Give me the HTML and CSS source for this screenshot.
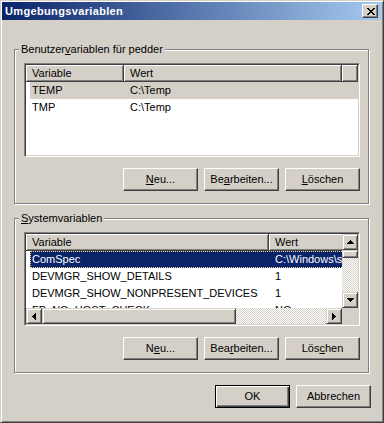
FILE: index.html
```html
<!DOCTYPE html>
<html lang="de">
<head>
    <meta charset="UTF-8">
    <meta name="viewport" content="width=device-width, initial-scale=1.0">
    <title>Umgebungsvariablen</title>
    <link rel="stylesheet" href="styles.css">
</head>
<body>
    <div class="window">
        <div class="titlebar">
            <span class="title">Umgebungsvariablen</span>
            <button class="close-btn" title="Schließen">
                <svg width="8" height="7" viewBox="0 0 8 7" shape-rendering="crispEdges"><path d="M0 0h2v1H0zM6 0h2v1H6zM1 1h2v1H1zM5 1h2v1H5zM2 2h4v1H2zM3 3h2v1H3zM2 4h4v1H2zM1 5h2v1H1zM5 5h2v1H5zM0 6h2v1H0zM6 6h2v1H6z"/></svg>
            </button>
        </div>

        <div class="dialog-body">
            <!-- user variables -->
            <div class="group">
                <div class="group-title">Benutzer<u>v</u>ariablen für pedder</div>
                <div class="listview">
                    <div class="lv-header">
                        <div class="lv-col user-name">Variable</div>
                        <div class="lv-col user-value">Wert</div>
                        <div class="lv-col lv-filler"></div>
                    </div>
                    <div class="lv-row inactive-sel">
                        <span class="cell user-name-cell">TEMP</span>
                        <span class="cell value-cell">C:\Temp</span>
                    </div>
                    <div class="lv-row">
                        <span class="cell user-name-cell">TMP</span>
                        <span class="cell value-cell">C:\Temp</span>
                    </div>
                </div>
                <div class="btn-row">
                    <button class="btn"><u>N</u>eu...</button>
                    <button class="btn">Be<u>a</u>rbeiten...</button>
                    <button class="btn"><u>L</u>öschen</button>
                </div>
            </div>

            <!-- system variables -->
            <div class="group system-group">
                <div class="group-title"><u>S</u>ystemvariablen</div>
                <div class="listview scrolling">
                    <div class="lv-viewport">
                        <div class="lv-header">
                            <div class="lv-col sys-name">Variable</div>
                            <div class="lv-col sys-value">Wert</div>
                        </div>
                        <div class="lv-row wide focused-sel">
                            <span class="cell sys-name-cell">ComSpec</span>
                            <span class="cell value-cell">C:\Windows\system32\cmd.exe</span>
                        </div>
                        <div class="lv-row wide">
                            <span class="cell sys-name-cell">DEVMGR_SHOW_DETAILS</span>
                            <span class="cell value-cell">1</span>
                        </div>
                        <div class="lv-row wide">
                            <span class="cell sys-name-cell">DEVMGR_SHOW_NONPRESENT_DEVICES</span>
                            <span class="cell value-cell">1</span>
                        </div>
                        <div class="lv-row wide">
                            <span class="cell sys-name-cell">FP_NO_HOST_CHECK</span>
                            <span class="cell value-cell">NO</span>
                        </div>
                    </div>

                    <div class="vscroll">
                        <div class="sb-btn">
                            <svg width="7" height="4" viewBox="0 0 7 4" shape-rendering="crispEdges"><path d="M3 0h1v1H3zM2 1h3v1H2zM1 2h5v1H1zM0 3h7v1H0z"/></svg>
                        </div>
                        <div class="sb-thumb v-thumb"></div>
                        <div class="sb-track"></div>
                        <div class="sb-btn">
                            <svg width="7" height="4" viewBox="0 0 7 4" shape-rendering="crispEdges"><path d="M0 0h7v1H0zM1 1h5v1H1zM2 2h3v1H2zM3 3h1v1H3z"/></svg>
                        </div>
                    </div>

                    <div class="hscroll">
                        <div class="sb-btn">
                            <svg width="4" height="7" viewBox="0 0 4 7" shape-rendering="crispEdges"><path d="M3 0h1v7H3zM2 1h1v5H2zM1 2h1v3H1zM0 3h1v1H0z"/></svg>
                        </div>
                        <div class="sb-thumb h-thumb"></div>
                        <div class="sb-track"></div>
                        <div class="sb-btn">
                            <svg width="4" height="7" viewBox="0 0 4 7" shape-rendering="crispEdges"><path d="M0 0h1v7H0zM1 1h1v5H1zM2 2h1v3H2zM3 3h1v1H3z"/></svg>
                        </div>
                    </div>

                    <div class="sb-corner"></div>
                </div>
                <div class="btn-row">
                    <button class="btn">N<u>e</u>u...</button>
                    <button class="btn">Bea<u>r</u>beiten...</button>
                    <button class="btn">Lös<u>c</u>hen</button>
                </div>
            </div>

            <div class="dialog-buttons">
                <button class="btn default">OK</button>
                <button class="btn">Abbrechen</button>
            </div>
        </div>
    </div>
</body>
</html>
```

FILE: styles.css
```css
:root {
    --face: #d4d0c8;
    --light: #ffffff;
    --shadow: #808080;
    --dark: #404040;
    --navy: #0a246a;
    --caption-end: #a6caf0;
}

* {
    margin: 0;
    padding: 0;
    box-sizing: border-box;
}

body {
    font-family: "Liberation Sans", Arial, sans-serif;
    font-size: 11px;
    color: #000;
    background: var(--face);
}

button {
    font: inherit;
    color: inherit;
}

.window {
    width: 384px;
    height: 423px;
    background: var(--face);
    border: 1px solid;
    border-color: var(--face) var(--dark) var(--dark) var(--face);
    box-shadow: inset 1px 1px var(--light), inset -1px -1px var(--shadow);
    padding: 1px;
    display: flex;
    flex-direction: column;
}

/* caption */
.titlebar {
    height: 18px;
    display: flex;
    align-items: center;
    padding: 0 4px 0 3px;
    background: linear-gradient(to right, var(--navy), var(--caption-end));
}

.title {
    color: #fff;
    font-weight: bold;
    letter-spacing: 0.35px;
    line-height: 18px;
}

.close-btn {
    margin-left: auto;
    width: 16px;
    height: 14px;
    display: flex;
    align-items: center;
    justify-content: center;
    padding-left: 1px;
    background: var(--face);
    border: 1px solid;
    border-color: var(--light) var(--dark) var(--dark) var(--light);
    box-shadow: inset -1px -1px var(--shadow);
}

.dialog-body {
    padding: 29px 13px 0 12px;
}

/* group boxes */
.group {
    border: 1px solid var(--shadow);
    box-shadow: inset 1px 1px var(--light), 1px 1px var(--light);
    padding: 0 8px 12px 9px;
}

.system-group {
    margin-top: 14px;
}

.group-title {
    width: fit-content;
    margin: -7px 0 0 -5px;
    padding: 0 2px;
    line-height: 13px;
    background: var(--face);
}

/* list views */
.listview {
    margin-top: 7px;
    height: 94px;
    background: #fff;
    border: 1px solid;
    border-color: var(--shadow) var(--light) var(--light) var(--shadow);
    box-shadow: inset 1px 1px var(--dark), inset -1px -1px var(--face);
    padding: 1px;
    overflow: hidden;
}

.lv-header {
    display: flex;
    height: 17px;
}

.lv-col {
    flex-shrink: 0;
    height: 17px;
    padding: 1px 0 0 6px;
    line-height: 15px;
    white-space: nowrap;
    background: var(--face);
    border-right: 1px solid var(--dark);
    border-bottom: 1px solid var(--dark);
    box-shadow: inset 1px 1px var(--light), inset -1px -1px var(--shadow);
}

.user-name { width: 98px; }
.user-value { width: 218px; }
.lv-filler { flex: 1; }
.sys-name { width: 243px; }
.sys-value { width: 200px; }

.lv-row {
    display: flex;
    height: 17px;
    line-height: 17px;
    margin-left: 4px;
    white-space: nowrap;
}

.lv-row.wide {
    width: 420px;
}

.cell {
    flex-shrink: 0;
}

.user-name-cell {
    width: 94px;
    padding-left: 2px;
}

.sys-name-cell {
    width: 239px;
    padding-left: 2px;
}

.value-cell {
    padding-left: 6px;
}

.inactive-sel {
    background: var(--face);
}

.focused-sel {
    background: var(--navy);
    color: #fff;
    outline: 1px dotted #f5db95;
    outline-offset: -1px;
}

/* list with scrollbars */
.listview.scrolling {
    display: grid;
    grid-template-columns: 1fr 16px;
    grid-template-rows: 1fr 16px;
}

.lv-viewport {
    overflow: hidden;
}

.vscroll {
    display: flex;
    flex-direction: column;
}

.hscroll {
    display: flex;
}

.sb-btn,
.sb-thumb {
    flex-shrink: 0;
    background: var(--face);
    border: 1px solid;
    border-color: var(--face) var(--dark) var(--dark) var(--face);
    box-shadow: inset 1px 1px var(--light), inset -1px -1px var(--shadow);
}

.sb-btn {
    width: 16px;
    height: 16px;
    display: flex;
    align-items: center;
    justify-content: center;
}

.sb-btn svg {
    fill: #000;
}

.v-thumb {
    height: 8px;
}

.h-thumb {
    width: 194px;
}

.sb-track {
    flex: 1;
    background: repeating-conic-gradient(var(--light) 0 25%, var(--face) 0 50%) 0 0 / 2px 2px;
}

.sb-corner {
    background: var(--face);
}

/* push buttons */
.btn-row {
    display: flex;
    justify-content: flex-end;
    gap: 6px;
    margin-top: 11px;
}

.btn {
    width: 75px;
    height: 23px;
    background: var(--face);
    border: 1px solid;
    border-color: var(--light) var(--dark) var(--dark) var(--light);
    box-shadow: inset -1px -1px var(--shadow);
    line-height: 19px;
}

.btn.default {
    border-color: #000;
    box-shadow: inset 1px 1px var(--light), inset -1px -1px var(--dark), inset -2px -2px var(--shadow);
}

.dialog-buttons {
    display: flex;
    justify-content: flex-end;
    gap: 6px;
    margin: 12px -2px 0 0;
}
```
